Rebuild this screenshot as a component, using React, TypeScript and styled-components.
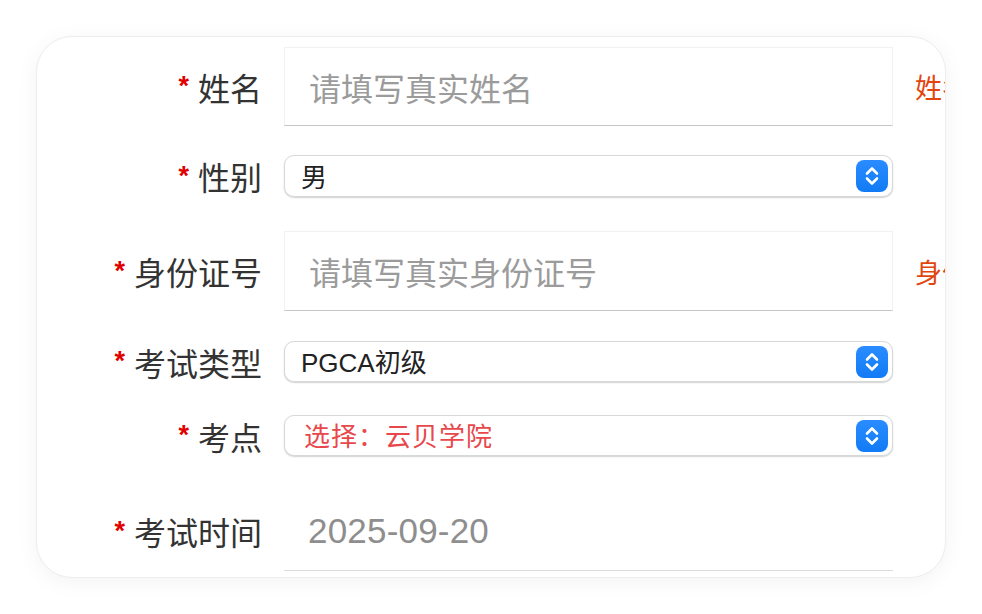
import React from "react";
import styled, { createGlobalStyle } from "styled-components";

const Global = createGlobalStyle`
  html, body { margin: 0; padding: 0; background: #ffffff; }
  body { font-family: "Noto Sans CJK SC", "Noto Sans", sans-serif; }
  * { box-sizing: border-box; }
`;

const Page = styled.div`
  width: 982px;
  height: 614px;
  padding: 36px;
`;

const Card = styled.div`
  width: 910px;
  height: 542px;
  background: #ffffff;
  border: 1px solid #ededed;
  border-radius: 36px;
  box-shadow: 0 4px 22px rgba(0, 0, 0, 0.05);
  overflow: hidden;
  padding-top: 10px;
`;

const Row = styled.div<{ $top: number; $h: number }>`
  display: grid;
  grid-template-columns: 225px 609px max-content;
  column-gap: 22px;
  align-items: center;
  height: ${(p) => p.$h}px;
  margin-top: ${(p) => p.$top}px;
`;

const Label = styled.div`
  display: flex;
  justify-content: flex-end;
  align-items: center;
  gap: 9px;
  font-size: 32px;
  line-height: 1;
  color: #333333;
  white-space: nowrap;
`;

const Star = styled.span`
  font-family: "Liberation Sans", Arial, sans-serif;
  font-weight: 700;
  font-size: 27px;
  color: #e00000;
  transform: translateY(0px);
`;

const TextField = styled.input`
  width: 609px;
  height: 100%;
  border: 1px solid #f1f1f1;
  border-bottom: 1px solid #c6c6c6;
  background: #ffffff;
  padding: 0 0 0 24px;
  font-family: "Noto Sans CJK SC", "Noto Sans", sans-serif;
  font-size: 32px;
  color: #333;
  outline: none;
  &::placeholder { color: #9b9b9b; }
`;

const DateField = styled.div`
  width: 609px;
  height: 100%;
  display: flex;
  align-items: center;
  border-bottom: 1px solid #dddddd;
  padding-left: 24px;
  font-family: "Liberation Sans", Arial, sans-serif;
  font-size: 35px;
  letter-spacing: 0.2px;
  color: #8e8e8e;
`;

const SelectBox = styled.div`
  width: 609px;
  height: 100%;
  display: flex;
  align-items: center;
  justify-content: space-between;
  padding: 0 4px 0 16px;
  border: 1px solid #d8d8d8;
  border-radius: 10px;
  background: #ffffff;
  box-shadow: 0 1px 1.5px rgba(0, 0, 0, 0.18);
`;

const SelectText = styled.span<{ $accent?: boolean }>`
  font-family: "Liberation Sans", "Noto Sans CJK SC", sans-serif;
  font-size: 26px;
  padding-top: 3px;
  padding-left: ${(p) => (p.$accent ? "3px" : "0")};
  letter-spacing: ${(p) => (p.$accent ? "1px" : "0")};
  color: ${(p) => (p.$accent ? "#e8474b" : "#222222")};
  line-height: 1;
`;

const Stepper = styled.div`
  width: 32px;
  height: 32px;
  border-radius: 8px;
  background: linear-gradient(#2a8cff, #117bf5);
  display: flex;
  align-items: center;
  justify-content: center;
`;

const ErrorText = styled.div`
  font-size: 27px;
  color: #e2460f;
  white-space: nowrap;
`;

const Chevrons = () => (
  <svg width="20" height="24" viewBox="0 0 20 24" fill="none">
    <path d="M5 9.5 L10 4.5 L15 9.5" stroke="#fff" strokeWidth="2.6" strokeLinecap="round" strokeLinejoin="round" />
    <path d="M5 14.5 L10 19.5 L15 14.5" stroke="#fff" strokeWidth="2.6" strokeLinecap="round" strokeLinejoin="round" />
  </svg>
);

const Req: React.FC<{ text: string }> = ({ text }) => (
  <Label>
    <Star>*</Star>
    <span>{text}</span>
  </Label>
);

const Select: React.FC<{ value: string; accent?: boolean }> = ({ value, accent }) => (
  <SelectBox>
    <SelectText $accent={accent}>{value}</SelectText>
    <Stepper>
      <Chevrons />
    </Stepper>
  </SelectBox>
);

export default function App() {
  return (
    <>
      <Global />
      <Page>
        <Card>
          <Row $top={0} $h={79}>
            <Req text="姓名" />
            <TextField readOnly placeholder="请填写真实姓名" />
            <ErrorText>姓名不能为空</ErrorText>
          </Row>
          <Row $top={29} $h={42}>
            <Req text="性别" />
            <Select value="男" />
          </Row>
          <Row $top={34} $h={80}>
            <Req text="身份证号" />
            <TextField readOnly placeholder="请填写真实身份证号" />
            <ErrorText>身份证号不能为空</ErrorText>
          </Row>
          <Row $top={30} $h={41}>
            <Req text="考试类型" />
            <Select value="PGCA初级" />
          </Row>
          <Row $top={33} $h={41}>
            <Req text="考点" />
            <Select value="选择：云贝学院" accent />
          </Row>
          <Row $top={35} $h={80}>
            <Req text="考试时间" />
            <DateField>2025-09-20</DateField>
          </Row>
        </Card>
      </Page>
    </>
  );
}
